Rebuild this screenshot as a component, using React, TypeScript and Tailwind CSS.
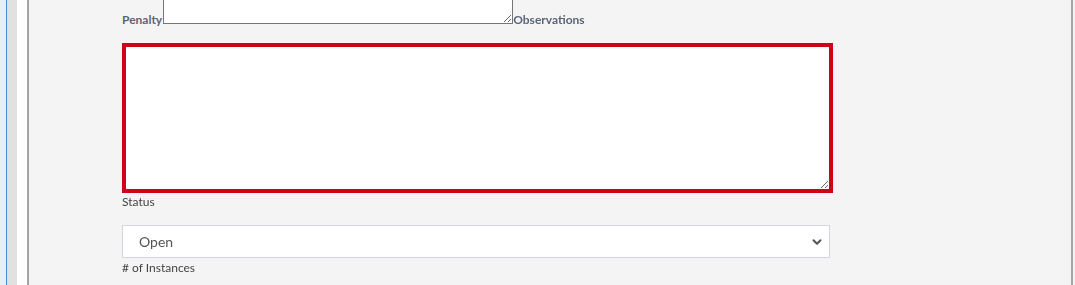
import { ChevronDown } from 'lucide-react'

const font = { fontFamily: 'Lato, "Open Sans", sans-serif' }

export default function App() {
  return (
    <div className="flex h-[285px] w-[1075px] overflow-hidden bg-white" style={font}>
      <div className="w-[6px] bg-[#e9eef5]" />
      <div className="w-px bg-[#3b8fd2]" />
      <div className="w-[10px] bg-[#e1e1e1]" />
      <div className="w-[10px] bg-white" />
      <div className="flex-1 border-x-2 border-[#a4a4a4] bg-[#f4f4f4] pl-[93px]">
        {/* penalty / observations row */}
        <div className="flex h-[26px] items-start">
          <label className="mt-[13px] text-[12px] font-bold leading-[14px] text-[#5b6575]">Penalty</label>
          <textarea
            className="ml-px block h-[24px] w-[350px] border border-t-0 border-[#767676] bg-white outline-none"
            defaultValue=""
          />
          <label className="mt-[13px] text-[12px] font-bold leading-[14px] text-[#5b6575]">Observations</label>
        </div>

        <textarea
          className="mt-[17px] block h-[150px] w-[711px] border-4 border-[#d0021b] bg-white outline-none"
          defaultValue=""
        />

        <label className="mt-[2px] block text-[12px] leading-[14px] text-[#444]">Status</label>

        <div className="mt-[16px] flex h-[33px] w-[708px] items-center justify-between border border-[#d3d6dd] bg-white pl-4 pr-[5px]">
          <span className="text-[14px] text-[#555]">Open</span>
          <ChevronDown className="h-[14px] w-[14px] text-[#555]" strokeWidth={3.5} />
        </div>

        <label className="mt-[3px] block text-[12px] leading-[14px] text-[#444]"># of Instances</label>
      </div>
      <div className="w-[2px] bg-[#f4f4f4]" />
    </div>
  )
}
